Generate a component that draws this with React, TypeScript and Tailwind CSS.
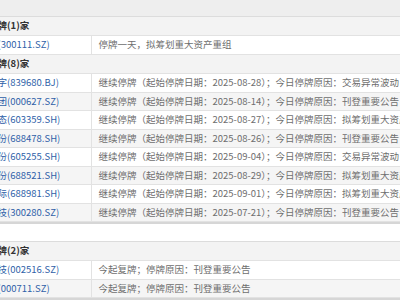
const rowsA = [{ name: "向日葵", code: "300111.SZ", text: "停牌一天，拟筹划重大资产重组" }];

const rowsB = [
  { name: "广道数字", code: "839680.BJ", date: "2025-08-28", reason: "交易异常波动" },
  { name: "天茂集团", code: "000627.SZ", date: "2025-08-14", reason: "刊登重要公告" },
  { name: "东珠生态", code: "603359.SH", date: "2025-08-27", reason: "拟筹划重大资产重组" },
  { name: "晶升股份", code: "688478.SH", date: "2025-08-26", reason: "刊登重要公告" },
  { name: "天普股份", code: "605255.SH", date: "2025-09-04", reason: "交易异常波动" },
  { name: "芯原股份", code: "688521.SH", date: "2025-08-29", reason: "拟筹划重大资产重组" },
  { name: "中芯国际", code: "688981.SH", date: "2025-09-01", reason: "拟筹划重大资产重组" },
  { name: "紫天科技", code: "300280.SZ", date: "2025-07-21", reason: "刊登重要公告" },
];

const rowsC = [
  { name: "旷达科技", code: "002516.SZ", text: "今起复牌；停牌原因：刊登重要公告" },
  { name: "京蓝科", code: "000711.SZ", text: "今起复牌；停牌原因：刊登重要公告" },
];

function Header({ label }: { label: string }) {
  return (
    <div className="h-[19.5px] flex items-center pl-[6px] bg-[#f3f3f3] border-b border-[#e2e2e2] text-[#333333] font-semibold">
      {label}
    </div>
  );
}

function Row({ name, code, text, gray }: { name: string; code: string; text: string; gray: boolean }) {
  return (
    <div className={`h-[18.5px] flex border-b border-[#e2e2e2] ${gray ? "bg-[#f5f5f5]" : "bg-white"}`}>
      <div className="w-[128.5px] shrink-0 flex items-center pl-[6px] border-r border-[#e2e2e2] text-[#2f5fa8] whitespace-nowrap">
        {name}({code})
      </div>
      <div className="flex-1 flex items-center pl-[7px] text-[#6e6e6e] whitespace-nowrap">{text}</div>
    </div>
  );
}

export default function App() {
  return (
    <div
      className="w-[400px] h-[300px] overflow-hidden bg-white text-[9.5px] leading-none"
      style={{ fontFamily: '"Noto Sans CJK SC", "Noto Sans", sans-serif' }}
    >
      <div className="ml-[-37px] w-[640px]">
        <div className="h-[16.5px] bg-[#eeeeee] border-b border-[#dcdcdc]" />
        <Header label="新增停牌(1)家" />
        {rowsA.map((r) => (
          <Row key={r.code} name={r.name} code={r.code} text={r.text} gray={false} />
        ))}
        <Header label="继续停牌(8)家" />
        {rowsB.map((r, i) => (
          <Row
            key={r.code}
            name={r.name}
            code={r.code}
            text={`继续停牌（起始停牌日期：${r.date}）；今日停牌原因：${r.reason}`}
            gray={i % 2 === 1}
          />
        ))}
        <div className="h-[2px] bg-[#d6d6d6]" />
        <div className="h-[17.5px] bg-white border-b border-[#dcdcdc]" />
        <Header label="今日复牌(2)家" />
        {rowsC.map((r, i) => (
          <Row key={r.code} name={r.name} code={r.code} text={r.text} gray={i % 2 === 1} />
        ))}
        <div className="h-[2px] bg-[#d6d6d6]" />
      </div>
    </div>
  );
}
